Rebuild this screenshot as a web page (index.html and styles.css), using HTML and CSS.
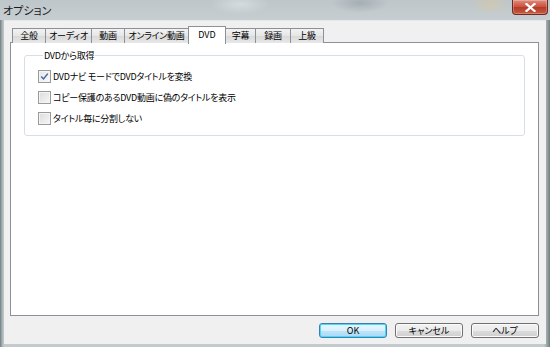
FILE: index.html
```html
<!DOCTYPE html>
<html lang="ja">
<head>
    <meta charset="UTF-8">
    <title>オプション</title>
    <link rel="stylesheet" href="styles.css">
</head>
<body>
    <div class="window">
        <div class="titlebar">
            <span class="title">オプション</span>
            <button class="close-btn" aria-label="閉じる">
                <svg width="11" height="9" viewBox="0 0 11 9">
                    <path d="M1.5 1 L9.5 8 M9.5 1 L1.5 8" stroke="#fff" stroke-width="2.2" stroke-linecap="square"/>
                </svg>
            </button>
        </div>

        <div class="client">
            <!-- タブ -->
            <div class="tabs">
                <div class="tab">全般</div>
                <div class="tab">オーディオ</div>
                <div class="tab">動画</div>
                <div class="tab">オンライン動画</div>
                <div class="tab active">DVD</div>
                <div class="tab">字幕</div>
                <div class="tab">録画</div>
                <div class="tab">上級</div>
            </div>

            <div class="panel">
                <fieldset class="group">
                    <legend>DVDから取得</legend>
                    <label class="check-row">
                        <span class="check checked">
                            <svg width="9" height="9" viewBox="0 0 9 9">
                                <path d="M1.2 4.6 L3.5 6.9 L7.8 1.6" fill="none" stroke="#3d63a8" stroke-width="1.4"/>
                            </svg>
                        </span>
                        DVDナビ モードでDVDタイトルを変換
                    </label>
                    <label class="check-row">
                        <span class="check"></span>
                        コピー保護のあるDVD動画に偽のタイトルを表示
                    </label>
                    <label class="check-row">
                        <span class="check"></span>
                        タイトル毎に分割しない
                    </label>
                </fieldset>
            </div>

            <div class="buttons">
                <button class="btn default">OK</button>
                <button class="btn">キャンセル</button>
                <button class="btn">ヘルプ</button>
            </div>
        </div>
    </div>
</body>
</html>
```

FILE: styles.css
```css
* {
    margin: 0;
    padding: 0;
    box-sizing: border-box;
}

body, html {
    width: 550px;
    height: 347px;
    overflow: hidden;
    font-family: "Noto Sans CJK JP", "Liberation Sans", sans-serif;
    font-size: 9px;
    font-feature-settings: "palt";
    letter-spacing: -0.25px;
    color: #000;
}

.window {
    display: flex;
    flex-direction: column;
    height: 347px;
    background: linear-gradient(90deg, #6f7d80 0, #a5b0b4 2px, #c3cacd 4px, #c3cacd 544px, #9aa5a8 547px, #717c7f 550px);
    padding: 0 4px 3px 4px;
}

.titlebar {
    height: 20px;
    margin: 0 -4px;
    padding: 0 2px 0 3px;
    display: flex;
    align-items: flex-start;
    justify-content: space-between;
    background:
        radial-gradient(ellipse 30px 10px at 240px 4px, rgba(255, 255, 255, 0.35), transparent),
        radial-gradient(ellipse 28px 10px at 360px 3px, rgba(90, 100, 110, 0.25), transparent),
        radial-gradient(ellipse 20px 10px at 490px 4px, rgba(230, 200, 140, 0.4), transparent),
        linear-gradient(#bdc6ca, #c7ced1);
}

.title {
    font-size: 11px;
    line-height: 20px;
    letter-spacing: 0;
    color: #1a1a1a;
}

.close-btn {
    width: 36px;
    height: 15px;
    border: 1px solid #6e2a22;
    border-top: none;
    border-radius: 0 0 4px 4px;
    background: linear-gradient(#e08c7c, #c94f3d 50%, #b33a28 51%, #c85a40);
    display: flex;
    align-items: center;
    justify-content: center;
    box-shadow: inset 0 0 0 1px rgba(255, 255, 255, 0.25);
}

.client {
    flex: 1;
    background: #f0f0f0;
    border-top: 1px solid #e4e8ea;
    padding: 4px 7px 0 6px;
    display: flex;
    flex-direction: column;
}

.tabs {
    display: flex;
    align-items: flex-end;
    height: 18px;
    padding-left: 2px;
    position: relative;
    z-index: 1;
}

.tab {
    width: 33px;
    height: 15px;
    line-height: 14px;
    text-align: center;
    border: 1px solid #8c9197;
    border-bottom: none;
    border-left: none;
    background: linear-gradient(#f2f2f2, #e6e6e6 50%, #d9d9d9 51%, #e8e8e8);
    white-space: nowrap;
}

.tab:first-child {
    width: 34px;
    border-left: 1px solid #8c9197;
}

.tab:nth-child(2) { width: 46px; }
.tab:nth-child(4) { width: 64px; }
.tab:nth-child(6) { width: 30px; }
.tab:nth-child(7) { width: 35px; }

.tab.active {
    width: 38px;
    height: 18px;
    line-height: 16px;
    background: #fff;
    border-left: 1px solid #8c9197;
    margin-left: -1px;
    margin-bottom: -1px;
    letter-spacing: 0;
}

.panel {
    height: 274px;
    margin-top: -1px;
    background: #fff;
    border: 1px solid #8c9197;
    padding: 7px 13px 0 13px;
}

.group {
    border: 1px solid #d5dfe5;
    border-radius: 3px;
    height: 86px;
    padding: 5px 0 0 13px;
}

.group legend {
    margin-left: 5px;
    padding: 0 1px;
    line-height: 11px;
}

.check-row {
    display: flex;
    align-items: center;
    gap: 2px;
    height: 21px;
    white-space: nowrap;
}

.check {
    width: 13px;
    height: 13px;
    border: 1px solid #9a9a9a;
    background: linear-gradient(135deg, #dcdcdc, #f6f6f6);
    box-shadow: inset 0 0 0 1px #f4f4f4;
    display: flex;
    align-items: center;
    justify-content: center;
}

.check.checked {
    background: linear-gradient(135deg, #e4e4e4, #fafafa);
}

.buttons {
    display: flex;
    justify-content: flex-end;
    gap: 8px;
    padding: 7px 0 0 0;
}

.btn {
    width: 68px;
    height: 15px;
    font-family: inherit;
    font-size: 9px;
    font-feature-settings: "palt";
    line-height: 13px;
    border: 1px solid #707070;
    border-radius: 3px;
    background: linear-gradient(#f2f2f2, #ebebeb 50%, #dddddd 51%, #cfcfcf);
    box-shadow: inset 0 0 0 1px #fcfcfc;
    color: #000;
}

.btn.default {
    border-color: #3c7fb1;
    background: linear-gradient(#eaf6fd, #d9f0fc 50%, #bee6fd 51%, #a7d9f5);
    box-shadow: inset 0 0 0 1px #48d8f8;
}
```
